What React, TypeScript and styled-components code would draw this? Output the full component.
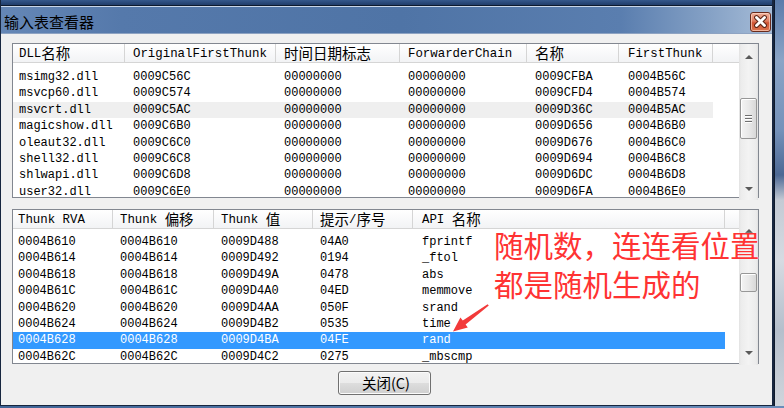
import React from "react";
import styled, { createGlobalStyle } from "styled-components";

type Column = { label: string; width: number; pad: number };
type RowState = "normal" | "hover" | "selected";

const dllColumns: Column[] = [
  { label: "DLL名称", width: 112, pad: 6 },
  { label: "OriginalFirstThunk", width: 151, pad: 8 },
  { label: "时间日期标志", width: 124, pad: 8 },
  { label: "ForwarderChain", width: 127, pad: 8 },
  { label: "名称", width: 92, pad: 8 },
  { label: "FirstThunk", width: 94, pad: 9 },
];

const thunkColumns: Column[] = [
  { label: "Thunk RVA", width: 100, pad: 5 },
  { label: "Thunk 偏移", width: 101, pad: 7 },
  { label: "Thunk 值", width: 99, pad: 7 },
  { label: "提示/序号", width: 100, pad: 7 },
  { label: "API 名称", width: 312, pad: 9 },
];

const dllRows = [
  ["msimg32.dll", "0009C56C", "00000000", "00000000", "0009CFBA", "0004B56C"],
  ["msvcp60.dll", "0009C574", "00000000", "00000000", "0009CFD4", "0004B574"],
  ["msvcrt.dll", "0009C5AC", "00000000", "00000000", "0009D36C", "0004B5AC"],
  ["magicshow.dll", "0009C6B0", "00000000", "00000000", "0009D656", "0004B6B0"],
  ["oleaut32.dll", "0009C6C0", "00000000", "00000000", "0009D676", "0004B6C0"],
  ["shell32.dll", "0009C6C8", "00000000", "00000000", "0009D694", "0004B6C8"],
  ["shlwapi.dll", "0009C6D8", "00000000", "00000000", "0009D6DC", "0004B6D8"],
  ["user32.dll", "0009C6E0", "00000000", "00000000", "0009D6FA", "0004B6E0"],
];

const thunkRows = [
  ["0004B610", "0004B610", "0009D488", "04A0", "fprintf"],
  ["0004B614", "0004B614", "0009D492", "0194", "_ftol"],
  ["0004B618", "0004B618", "0009D49A", "0478", "abs"],
  ["0004B61C", "0004B61C", "0009D4A0", "04ED", "memmove"],
  ["0004B620", "0004B620", "0009D4AA", "050F", "srand"],
  ["0004B624", "0004B624", "0009D4B2", "0535", "time"],
  ["0004B628", "0004B628", "0009D4BA", "04FE", "rand"],
  ["0004B62C", "0004B62C", "0009D4C2", "0275", "_mbscmp"],
];

const CJK_RE = /([\u2e80-\u9fff\u3000-\u303f\uff00-\uffef]+)/;

// CJK runs are set larger than the half-width latin text, like SimSun
function MixedText({ value }: { value: string }) {
  return (
    <>
      {value.split(CJK_RE).map((part, i) =>
        i % 2 === 1 ? <Cjk key={i}>{part}</Cjk> : part
      )}
    </>
  );
}

type ScrollSpec = { up: number; down: number; thumbTop: number; thumbH: number; grip: boolean };

type ListProps = {
  columns: Column[];
  rows: string[][];
  stateOf: (index: number) => RowState;
  scroll: ScrollSpec;
  bodyTop: number;
};

function ListView({ columns, rows, stateOf, scroll, bodyTop }: ListProps) {
  const template = columns.map((c) => `${c.width}px`).join(" ");
  return (
    <ListBox>
      <ListPane>
        <HeaderRow>
          {columns.map((c) => (
            <HeaderCell key={c.label} $w={c.width} $pad={c.pad}>
              <MixedText value={c.label} />
            </HeaderCell>
          ))}
          <HeaderFiller />
        </HeaderRow>
        <RowsArea $top={bodyTop}>
          {rows.map((r, i) => (
            <Row key={r[0] + i} $cols={template} $state={stateOf(i)}>
              {r.map((v, j) => (
                <Cell key={j} $pad={columns[j].pad}>
                  {v}
                </Cell>
              ))}
            </Row>
          ))}
        </RowsArea>
      </ListPane>
      <ScrollBar>
        <ScrollArrow $h={scroll.up} />
        <Track>
          <Thumb $top={scroll.thumbTop} $h={scroll.thumbH}>
            {scroll.grip && <Grip />}
          </Thumb>
        </Track>
        <ScrollArrow $h={scroll.down} $down />
      </ScrollBar>
    </ListBox>
  );
}

export default function App() {
  return (
    <>
      <GlobalStyle />
      <Desktop>
        <Stage>
          <Window>
            <TopEdge />
            <TitleBar>
              <TitleText>输入表查看器</TitleText>
              <CloseButton>
                <svg width="19" height="18" viewBox="0 0 19 18">
                  <path d="M5.5 4.5 L13.5 12.5 M13.5 4.5 L5.5 12.5" stroke="#5a2315" strokeWidth="4.8" strokeLinecap="round" />
                  <path d="M5.5 4.5 L13.5 12.5 M13.5 4.5 L5.5 12.5" stroke="#ffffff" strokeWidth="2.8" strokeLinecap="round" />
                </svg>
              </CloseButton>
            </TitleBar>
            <Client>
              <ListView
                columns={dllColumns}
                rows={dllRows}
                stateOf={(i) => (i === 2 ? "hover" : "normal")}
                scroll={{ up: 26, down: 22, thumbTop: 28, thumbH: 41, grip: true }}
                bodyTop={6}
              />
              <Spacer />
              <ListView
                columns={thunkColumns}
                rows={thunkRows}
                stateOf={(i) => (i === 6 ? "selected" : "normal")}
                scroll={{ up: 42, down: 24, thumbTop: 21, thumbH: 19, grip: false }}
                bodyTop={5}
              />
              <Footer>
                <PushButton>关闭(C)</PushButton>
              </Footer>
            </Client>
            <Annotation>{"随机数，连连看位置\n都是随机生成的"}</Annotation>
            <AnnotationArrow width="50" height="40" viewBox="0 0 50 40">
              <polygon points="42.8,5.6 19.6,24.6 21.8,27.6 7,31.5 14.4,17.6 16.8,20.6 41.6,4.2" fill="#f23a3a" />
            </AnnotationArrow>
          </Window>
          <SideStrip />
        </Stage>
        <TaskStrip />
      </Desktop>
    </>
  );
}

const GlobalStyle = createGlobalStyle`
  * { box-sizing: border-box; }
  html, body { margin: 0; padding: 0; }
  body {
    width: 784px;
    height: 408px;
    overflow: hidden;
    background: #4d70a0;
    font-family: "Liberation Mono", "Noto Sans CJK SC", monospace;
    font-size: 12px;
    color: #000;
  }
`;

const Cjk = styled.span`
  font-family: "Noto Sans CJK SC", sans-serif;
  font-size: 14.5px;
  line-height: 1;
`;

const Desktop = styled.div`
  width: 784px;
  height: 408px;
  display: flex;
  flex-direction: column;
`;

const Stage = styled.div`
  display: flex;
  height: 406px;
`;

const Window = styled.div`
  position: relative;
  width: 774px;
  height: 406px;
  display: flex;
  flex-direction: column;
  background: #f0f0f0;
  border-left: 1px solid #17263f;
  border-right: 2px solid #17263f;
  border-bottom: 1px solid #17263f;
`;

const TopEdge = styled.div`
  height: 6px;
  flex: none;
  background: linear-gradient(to bottom, #35588c, #203d6a);
  border-bottom: 1px solid #0d1a2e;
`;

const TitleBar = styled.div`
  height: 28px;
  flex: none;
  display: flex;
  justify-content: space-between;
  align-items: flex-start;
  padding-left: 3px;
  border-top: 1px solid #c9d6e8;
  border-bottom: 1px solid #8ea3c2;
  background: linear-gradient(
    to right,
    #6587b6 0,
    #5579ab 120px,
    #4f74a6 400px,
    #5a7eaf 620px,
    #86a2c6 710px,
    #a6bcd7 770px
  );
`;

const TitleText = styled.div`
  font-family: "Noto Sans CJK SC", sans-serif;
  font-size: 15px;
  line-height: 20px;
  margin-top: 5px;
  color: #000;
`;

const CloseButton = styled.div`
  width: 21px;
  height: 20px;
  margin-top: 5px;
  margin-right: 1px;
  display: flex;
  align-items: center;
  justify-content: center;
  border: 1px solid #6a2b1c;
  border-radius: 3px;
  background: linear-gradient(to bottom, #f0b09a 0, #e07d60 45%, #cf5232 55%, #dc7550 100%);
  box-shadow: inset 0 0 0 1px rgba(255, 225, 210, 0.6);
`;

const Client = styled.div`
  flex: 1;
  display: flex;
  flex-direction: column;
  padding: 9px 0 0 11px;
`;

const ListBox = styled.div`
  width: 747px;
  height: 155px;
  flex: none;
  display: grid;
  grid-template-columns: 1fr 19px;
  border: 1px solid #828790;
  background: #fff;
`;

const Spacer = styled.div`
  height: 11px;
  flex: none;
`;

const ListPane = styled.div`
  display: flex;
  flex-direction: column;
  min-width: 0;
`;

const HeaderRow = styled.div`
  display: flex;
  height: 19px;
  flex: none;
`;

const HeaderCell = styled.div<{ $w: number; $pad: number }>`
  width: ${(p) => p.$w}px;
  flex: none;
  display: flex;
  align-items: center;
  padding-left: ${(p) => p.$pad}px;
  padding-top: 1px;
  font-size: 12.4px;
  white-space: pre;
  background: linear-gradient(to bottom, #ffffff, #f2f3f5);
  border-right: 1px solid #d5d5d5;
  border-bottom: 1px solid #d5d5d5;
`;

const HeaderFiller = styled.div`
  flex: 1;
  background: linear-gradient(to bottom, #ffffff, #f2f3f5);
  border-bottom: 1px solid #d5d5d5;
`;

const RowsArea = styled.div<{ $top: number }>`
  padding-top: ${(p) => p.$top}px;
`;

const Row = styled.div<{ $cols: string; $state: RowState }>`
  display: grid;
  grid-template-columns: ${(p) => p.$cols};
  width: max-content;
  height: 16.4px;
  line-height: 16.4px;
  background: ${(p) =>
    p.$state === "selected" ? "#3399ff" : p.$state === "hover" ? "#efefef" : "transparent"};
  color: ${(p) => (p.$state === "selected" ? "#fff" : "#000")};
`;

const Cell = styled.div<{ $pad: number }>`
  padding-left: ${(p) => p.$pad}px;
  white-space: nowrap;
`;

const ScrollBar = styled.div`
  display: flex;
  flex-direction: column;
  background: linear-gradient(
    to right,
    #e2e2e2 0,
    #ececec 2px,
    #f3f3f3 50%,
    #ececec calc(100% - 2px),
    #e2e2e2 100%
  );
`;

const ScrollArrow = styled.div<{ $h: number; $down?: boolean }>`
  height: ${(p) => p.$h}px;
  flex: none;
  display: flex;
  align-items: center;
  justify-content: center;

  &::before {
    content: "";
    border-left: 4px solid transparent;
    border-right: 4px solid transparent;
    ${(p) => (p.$down ? "border-top: 4px solid #5a5a5a;" : "border-bottom: 4px solid #5a5a5a;")}
  }
`;

const Track = styled.div`
  flex: 1;
  display: flex;
  flex-direction: column;
  align-items: center;
`;

const Thumb = styled.div<{ $top: number; $h: number }>`
  margin-top: ${(p) => p.$top}px;
  height: ${(p) => p.$h}px;
  width: 17px;
  display: flex;
  align-items: center;
  justify-content: center;
  border: 1px solid #979797;
  border-radius: 2px;
  background: linear-gradient(to right, #f4f4f4, #e9e9e9 50%, #d8d8d8);
  box-shadow: inset 1px 1px 0 #ffffff;
`;

const Grip = styled.div`
  width: 7px;
  height: 8px;
  background: repeating-linear-gradient(
    to bottom,
    #6f6f6f 0,
    #6f6f6f 1px,
    #ffffff 1px,
    #ffffff 2px,
    transparent 2px,
    transparent 3px
  );
`;

const Footer = styled.div`
  width: 747px;
  margin-top: 7px;
  display: flex;
  justify-content: center;
  padding-right: 2px;
`;

const PushButton = styled.div`
  width: 93px;
  height: 24px;
  display: flex;
  align-items: center;
  justify-content: center;
  padding-left: 3px;
  border: 1px solid #707070;
  border-radius: 3px;
  background: linear-gradient(to bottom, #f2f2f2 0, #ebebeb 50%, #dddddd 51%, #cfcfcf 100%);
  box-shadow: inset 0 0 0 1px #fbfbfb;
  font-family: "Noto Sans CJK SC", sans-serif;
  font-size: 14.5px;
  line-height: 1;
`;

const Annotation = styled.div`
  position: absolute;
  left: 493px;
  top: 225px;
  font-family: "Noto Sans CJK SC", sans-serif;
  font-size: 29.5px;
  line-height: 39px;
  white-space: pre;
  color: #ff3333;
  text-shadow: 0 0 1px #ffffff, 0 0 1px #ffffff;
`;

const AnnotationArrow = styled.svg`
  position: absolute;
  left: 445px;
  top: 300px;
`;

const SideStrip = styled.div`
  flex: 1;
  border-left: 1px solid #0f1a2c;
  background: linear-gradient(
    to bottom,
    #5b7cab 0,
    #8aa4c6 60px,
    #7592ba 130px,
    #4c6894 175px,
    #c3cad4 200px,
    #d6dbe2 260px,
    #b5bfcc 330px,
    #d0d5dc 406px
  );
`;

const TaskStrip = styled.div`
  height: 2px;
  background: linear-gradient(to right, #3f6496, #6a8dba);
`;
